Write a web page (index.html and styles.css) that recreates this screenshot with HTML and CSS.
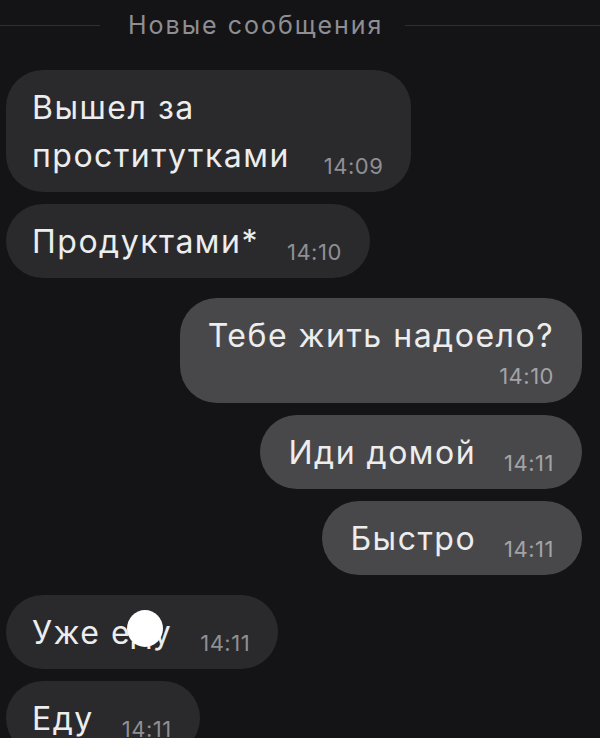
FILE: index.html
```html
<!DOCTYPE html>
<html lang="ru">
<head>
  <meta charset="UTF-8" />
  <meta name="viewport" content="width=device-width, initial-scale=1.0"/>
  <title>Чат</title>
  <link rel="stylesheet" href="styles.css">
</head>
<body>

  <div class="divider">
    <span class="line short"></span>
    <span class="label">Новые сообщения</span>
    <span class="line"></span>
  </div>

  <div class="chat">
    <div class="msg in">
      <div class="bubble">Вышел за<br>проститутками<span class="time far">14:09</span></div>
    </div>
    <div class="msg in">
      <div class="bubble">Продуктами*<span class="time">14:10</span></div>
    </div>

    <div class="msg out first">
      <div class="bubble">Тебе жить надоело?<div class="time block">14:10</div></div>
    </div>
    <div class="msg out">
      <div class="bubble">Иди домой<span class="time">14:11</span></div>
    </div>
    <div class="msg out">
      <div class="bubble">Быстро<span class="time">14:11</span></div>
    </div>

    <div class="msg in first">
      <div class="bubble">Уже е<span class="blot">д</span>у<span class="time">14:11</span></div>
    </div>
    <div class="msg in">
      <div class="bubble">Еду<span class="time">14:11</span></div>
    </div>
  </div>

</body>
</html>
```

FILE: styles.css
```css
body {
  margin: 0;
  height: 738px;
  overflow: hidden;
  background: #141416;
  font-family: Inter, 'Liberation Sans', sans-serif;
  color: #ededee;
}

.divider {
  display: flex;
  align-items: center;
  height: 50px;
}

.divider .line {
  flex: 1;
  height: 1px;
  background: #2f2f33;
}

.divider .line.short {
  flex: 0 0 100px;
}

.divider .label {
  margin: 0 22px 0 28px;
  font-size: 25px;
  letter-spacing: 2px;
  color: #8e8e93;
}

.chat {
  display: flex;
  flex-direction: column;
  gap: 12px;
  padding: 20px 18px 0 6px;
}

.msg {
  display: flex;
}

.msg.out {
  justify-content: flex-end;
}

.msg.first {
  margin-top: 8px;
}

.bubble {
  background: #2a2a2d;
  border-radius: 37px;
  padding: 14px 28px 12px 26px;
  font-size: 32px;
  line-height: 48px;
  letter-spacing: 1.5px;
}

.out .bubble {
  background: #48484a;
  padding-left: 28px;
}

.time {
  font-size: 22px;
  line-height: 1;
  letter-spacing: 0.5px;
  color: #8f8f94;
  margin-left: 28px;
  vertical-align: -7px;
}

.time.far {
  margin-left: 34px;
}

.out .time {
  color: #a3a3a7;
}

.time.block {
  margin: 1px 0 0;
  line-height: 30px;
  text-align: right;
}

.blot {
  position: relative;
}

.blot::after {
  content: "";
  position: absolute;
  left: -4px;
  top: -3px;
  width: 36px;
  height: 37px;
  border-radius: 50%;
  background: #fff;
}
```
